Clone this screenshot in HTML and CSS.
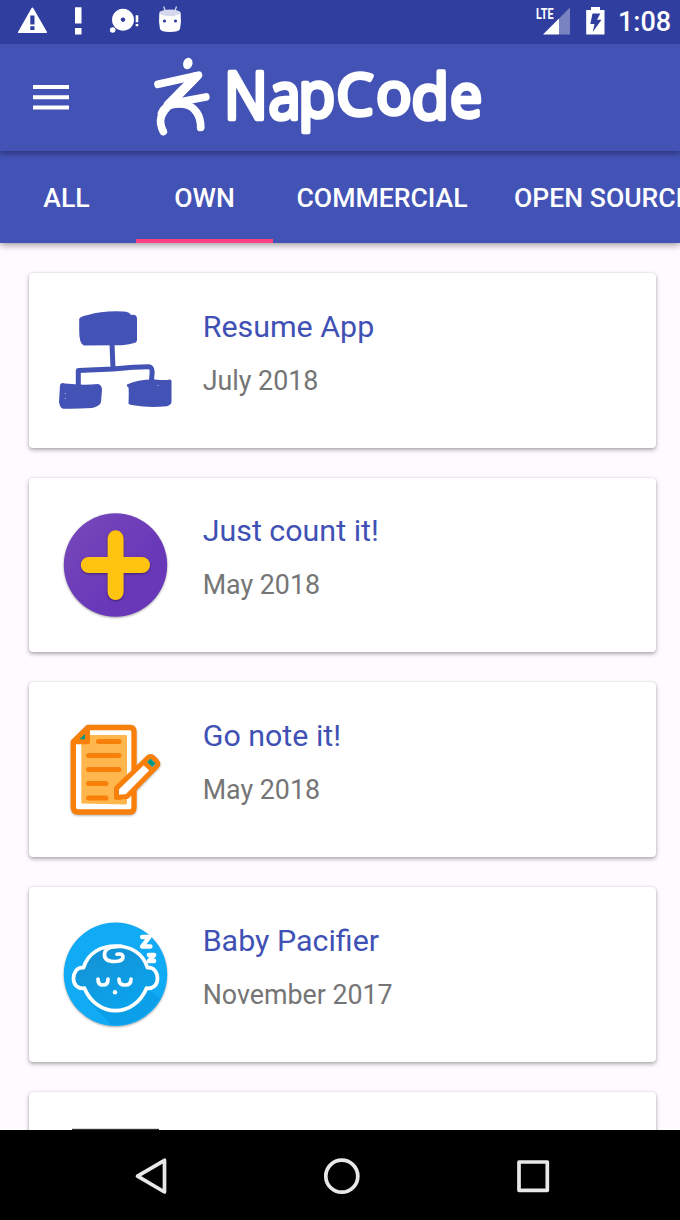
FILE: index.html
```
<!DOCTYPE html>
<html lang="en">
<head>
<meta charset="utf-8">
<title>NapCode</title>
<link rel="stylesheet" href="styles.css">
</head>
<body>
<div class="screen">
  <header class="status">
    <svg class="status-left" width="200" height="44" viewBox="0 0 200 44" fill="#fff">
      <path fill-rule="evenodd" d="M32.300 7.500Q33 7.500 33.500 8.500L47 32Q47 33 46.500 33H18.500Q17.500 33 18 32L31.300 8.500Q31.800 7.500 32.300 7.500ZM30.300 15.500V24.500H34.500V15.500ZM30.300 26.300V30H34.500V26.300Z"/>
      <path d="M75 7.200H81.500V23.500H75ZM75 28H81.500V34.500H75Z"/>
      <path fill-rule="evenodd" d="M123 8.700a11 11 0 1 0 .01 0ZM123 17.500a2.200 2.200 0 1 1-.01 0Z"/>
      <circle cx="112.700" cy="30" r="2.800"/>
      <path d="M135.700 15.300H138.300V22.300H135.700ZM135.700 24H138.300V26.200H135.700Z"/>
      <path d="M159.300 13Q170 18 180.700 13Q181.500 22 180 29Q179 32 170 32Q161 32 160 29Q158.500 22 159.300 13Z"/>
      <ellipse cx="170" cy="12.700" rx="10.700" ry="3.200" fill="#d5d8ee"/>
      <path d="M163.700 6.500L165.500 11.500M176.500 6.500L174.700 11.500" stroke="#d5d8ee" stroke-width="1.300"/>
      <circle cx="164.500" cy="21" r="1.600" fill="#303f9f"/><circle cx="175.500" cy="21" r="1.600" fill="#303f9f"/>
    </svg>
    <svg class="status-right" width="90" height="44" viewBox="530 0 90 44" fill="#fff">
      <text class="lte" x="536" y="19.200" textLength="17.500" lengthAdjust="spacingAndGlyphs">LTE</text>
      <path fill="#7983c1" d="M570 7.500V34.500H559V18.500Z"/>
      <path d="M559 18.500V34.500H543Z"/>
      <path fill-rule="evenodd" d="M586.200 10H591V7H600V10H604.500V34.500H586.200ZM592.500 13.500L590.300 24H594.500L592.800 32L601.500 19.800H597L600.300 13.500Z"/>
    </svg>
    <span class="clock">1:08</span>
  </header>
  <div class="toolbar">
    <svg class="menu" width="36" height="26" viewBox="0 0 36 26" fill="#fff"><path d="M0 0H36V4H0ZM0 10.300H36V14.300H0ZM0 20.500H36V24.500H0Z"/></svg>
    <svg class="logo" width="360" height="107" viewBox="140 44 360 107">
      <ellipse cx="187.800" cy="63.500" rx="4.600" ry="5.900" fill="#fff" transform="rotate(18 187.800 63.500)"/>
      <g class="figure">
        <path d="M158 84.300L198.500 75.200L171 103.500C160 114 158 121 163.300 131.500"/>
        <path d="M171 103.500L205.800 97"/>
        <path d="M161.500 113.500C165 105 174 103 184 104.300C195 106 201 116 200.700 127.500"/>
        <path d="M196 76.500L168 105" stroke-width="9"/>
      </g>
      <text class="wordmark" transform="scale(.88 1)"><tspan x="254.500" y="119">N</tspan><tspan x="305" y="119.500">a</tspan><tspan class="mark-p" x="339" y="117" textLength="42" lengthAdjust="spacingAndGlyphs">p</tspan><tspan class="mark-c" x="382.500" y="115" textLength="42" lengthAdjust="spacingAndGlyphs">C</tspan><tspan class="mark-o" x="427.500" y="114.300" textLength="40" lengthAdjust="spacingAndGlyphs">o</tspan><tspan class="mark-d" x="467.500" y="119.500" textLength="42.500" lengthAdjust="spacingAndGlyphs">d</tspan><tspan class="mark-e" x="511.500" y="117.500" textLength="36.500" lengthAdjust="spacingAndGlyphs">e</tspan></text>
    </svg>
  </div>
  <nav class="tabs">
    <a class="tab tab-all">ALL</a>
    <a class="tab tab-own active">OWN</a>
    <a class="tab tab-commercial">COMMERCIAL</a>
    <a class="tab tab-open">OPEN SOURCE</a>
  </nav>
  <main class="list">
    <article class="card">
      <svg width="130" height="130" viewBox="50 295 130 130" fill="#4352b5">
        <path d="M79.200 319Q80 316.500 88 315Q103 310.500 123 311.500Q129 311.300 131 315Q137 314 137 319V340Q137 343 132 343.500Q126 345.500 115 345.300L84 345.500Q79 344 79.200 330Z"/>
        <path d="M112 343.500L113 368.500M78.300 387V370.500L113 369Q145 366.300 150 367Q152.500 368 152 374L151.500 381" fill="none" stroke="#4352b5" stroke-width="5" stroke-linejoin="round"/>
        <path d="M60 385Q61 382.200 65 383.500Q83 385.500 98 384Q102 385 102 390L101 402Q100 406 92 408Q76 409 63 408.700Q60 408 59 402Z"/>
        <path d="M127 384.500Q139 379 155 379.500Q165 380.500 170 379.500Q172 380 171.500 383V402Q171 405 167 406.300Q148 408 135 405.500Q131 405 128.500 404Q129 392 128.500 387.500Q126 386 127 384.500Z"/>
        <circle cx="65.300" cy="393.500" r=".6" fill="#c9cdea"/><circle cx="65.300" cy="398.500" r=".6" fill="#c9cdea"/><circle cx="158" cy="385.500" r=".6" fill="#c9cdea"/>
      </svg>
      <div class="info"><h2>Resume App</h2><p>July 2018</p></div>
    </article>
    <article class="card">
      <svg width="130" height="130" viewBox="50 500 130 130">
        <defs><linearGradient id="purple" x1="0" y1="0" x2="1" y2="1"><stop offset=".1" stop-color="#7646ba"/><stop offset=".65" stop-color="#6838b9"/></linearGradient></defs>
        <circle class="disc" cx="115.500" cy="565" r="51.700" fill="url(#purple)"/>
        <path class="plus" d="M115.600 538.300V592M88.800 565H142"/>
      </svg>
      <div class="info"><h2>Just count it!</h2><p>May 2018</p></div>
    </article>
    <article class="card">
      <svg width="130" height="130" viewBox="50 705 130 130">
        <g class="note" stroke="#f77f0a" stroke-linejoin="round" stroke-linecap="round">
          <path d="M88 727.500H130Q134 727.500 134 732V807Q134 812 130 812H78Q73.300 812 73.300 807V742Z" fill="#fff" stroke-width="5.300"/>
          <path d="M81.300 735H126Q127 735 127 737V803Q127 804.500 125 804.500L81.300 803.500Z" fill="#ffb74d" stroke="none"/>
          <path d="M73.500 741.700L87.500 728V741.700Z" fill="#009688" stroke-width="5"/>
          <path d="M98.500 741.500H119M88.500 755.500H119M88.500 769.500H119M88.500 783.500H106M88.500 798H106" stroke-width="5"/>
          <path d="M116.500 788.300L148.500 757.300Q151 755.500 153.500 758L156.500 761Q159 764 156.500 766.500L127 796.500L116.500 797.500Z" fill="#fff" stroke-width="5"/>
          <path d="M150.500 758.500L155.700 763.500L152 767.300L146.800 762.300Z" fill="#009688" stroke="none"/>
          <path d="M144 762.500L151 769" stroke-width="4.500" stroke-linecap="butt"/>
        </g>
      </svg>
      <div class="info"><h2>Go note it!</h2><p>May 2018</p></div>
    </article>
    <article class="card">
      <svg width="130" height="130" viewBox="50 909.300 130 130">
        <defs><linearGradient id="shade" x1="0" y1="0" x2=".6" y2="1"><stop offset="0" stop-color="#168fd0"/><stop offset="1" stop-color="#0aa4ee"/></linearGradient></defs>
        <circle class="disc" cx="115.500" cy="974.500" r="51.700" fill="#10aaf5"/>
        <path d="M88 1001L111 1025Q143 1026 160 999L149 990Z" fill="#0b9fe9"/>
        <g class="baby">
          <path d="M83.500 968C88 953 101 946.300 115.500 946.300C130 946.300 143 953 147.500 968C154 967 157.500 973 157.500 979C157.500 985 153 989.500 146.500 988.500C141 1002 129 1011 115.500 1011C102 1011 90 1002 84.500 988.500C78 989.500 73.500 985 73.500 979C73.500 973 77 967 83.500 968Z" fill="url(#shade)"/>
          <path d="M122 946.800Q104.500 946 104.500 955Q104.500 961.800 115 961.800Q123 961.500 123 957Q122.500 953.500 117 954.500"/>
          <path d="M98 979.500Q98 985.300 103 985.300Q108 985.300 108 979.500M119 979.500Q119 985.300 125 985.300Q131 985.300 131 979.500"/>
          <path d="M142 937.300H149.500L142 946.800H150.500M148.800 955.300H154.200L148.800 961.300H154.200" stroke-width="4.300"/>
        </g>
        <circle cx="115" cy="992.500" r="2.200" fill="#fff"/>
      </svg>
      <div class="info"><h2>Baby Pacifier</h2><p>November 2017</p></div>
    </article>
    <article class="card">
      <svg width="130" height="130" viewBox="0 0 130 130"><rect x="22" y="14.800" width="87" height="100" fill="#333"/></svg>
    </article>
  </main>
  <footer class="navbar">
    <svg width="680" height="90" viewBox="0 1130 680 90" fill="none" stroke="#e8e8e8" stroke-width="3.700" stroke-linejoin="round">
      <path d="M164.500 1160.300V1192L137.500 1176.200Z"/>
      <circle cx="341.800" cy="1176.200" r="16"/>
      <rect x="519" y="1162" width="28.300" height="28.300"/>
    </svg>
  </footer>
</div>
</body>
</html>
```
FILE: styles.css
```
* { box-sizing: border-box; }
body { margin: 0; font-family: Roboto, "Liberation Sans", sans-serif; }
svg { display: block; flex: none; }
.screen {
  width: 680px;
  height: 1220px;
  display: flex;
  flex-direction: column;
  overflow: hidden;
  background: #fefaff;
}
.status {
  flex: none;
  height: 44px;
  display: flex;
  align-items: center;
  background: #303f9f;
  color: #fff;
  z-index: 3;
}
.status-right { margin-left: 330px; }
.lte { font: 700 14px Roboto, sans-serif; }
.clock { margin-left: -2px; font-size: 27px; font-weight: 500; line-height: 44px; white-space: nowrap; }
.toolbar {
  flex: none;
  height: 107px;
  display: flex;
  align-items: center;
  padding-left: 33px;
  background: #4352b5;
  box-shadow: 0 2px 6px rgba(0, 0, 0, .4);
  z-index: 2;
}
.logo { margin-left: 71px; }
.figure { fill: none; stroke: #fff; stroke-width: 7.7; stroke-linecap: round; stroke-linejoin: round; }
.wordmark {
  font: 400 66px "Open Sans", sans-serif;
  fill: #fff;
  stroke: #fff;
  stroke-width: 4.5;
  stroke-linejoin: round;
}
.mark-p { font-size: 64px; }
.mark-c { font-size: 57px; }
.mark-o { font-size: 58px; }
.mark-d { font-size: 63px; }
.mark-e { font-size: 61px; }
.tabs {
  flex: none;
  height: 92px;
  display: flex;
  background: #4352b5;
  color: #fff;
  font-size: 26.6px;
  font-weight: 500;
  line-height: 93px;
  white-space: nowrap;
  box-shadow: 0 2px 7px rgba(0, 0, 0, .4);
  z-index: 1;
}
.tab { flex: none; height: 92px; text-align: center; }
.tab-all { width: 136px; padding-right: 3px; }
.tab-own { width: 137px; }
.tab-commercial { width: 218px; }
.tab-open { padding-left: 23px; }
.active { border-bottom: 4px solid #ff4081; }
.list {
  flex: 1;
  min-height: 0;
  display: flex;
  flex-direction: column;
  gap: 30px;
  padding: 30px 24.5px 0 28.5px;
  overflow: hidden;
}
.card {
  flex: none;
  height: 174.7px;
  display: flex;
  align-items: center;
  padding-left: 21.5px;
  border-radius: 4px;
  background: #fff;
  box-shadow: 0 2px 4px rgba(0, 0, 0, .32), 0 0 2px rgba(0, 0, 0, .12);
}
.info { align-self: flex-start; padding: 34.5px 0 0 22.7px; }
.info h2 { margin: 0; color: #3f51b5; font-size: 30.4px; font-weight: 400; line-height: 38px; }
.info p { margin: 18.2px 0 0; color: #757575; font-size: 26.8px; line-height: 34px; }
.disc { filter: drop-shadow(0 1px 1px rgba(0, 0, 0, .35)); }
.plus {
  fill: none;
  stroke: #ffc40f;
  stroke-width: 16;
  stroke-linecap: round;
  filter: drop-shadow(0 1px 1px rgba(0, 0, 0, .4));
}
.note { filter: drop-shadow(0 1px 1px rgba(0, 0, 0, .3)); }
.baby { fill: none; stroke: #fff; stroke-width: 3.7; stroke-linecap: round; stroke-linejoin: round; }
.navbar { flex: none; height: 90px; background: #000; z-index: 1; }
```
